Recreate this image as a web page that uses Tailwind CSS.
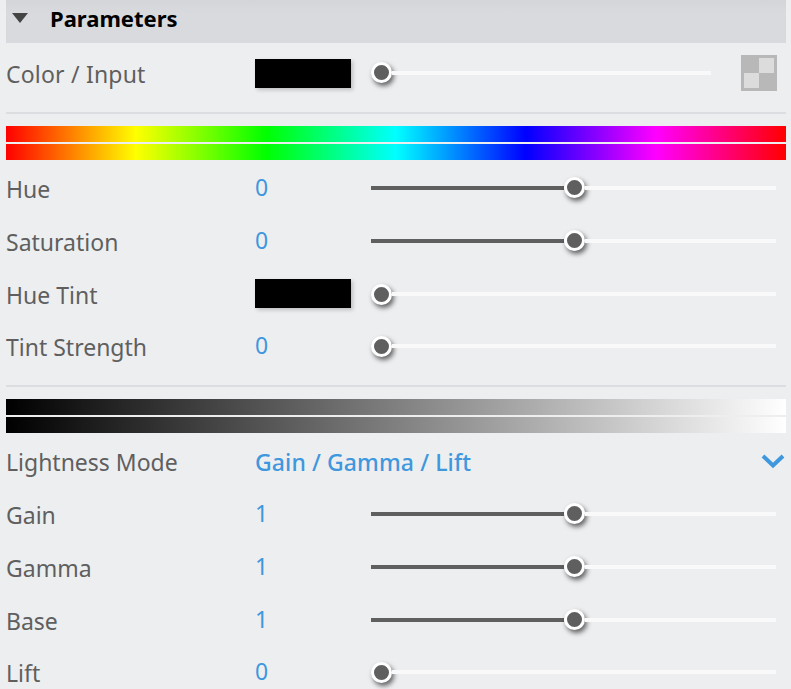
<!doctype html>
<html lang="en">
<head>
	<meta charset="UTF-8" />
	<title>Parameters</title>
	<script src="https://cdn.jsdelivr.net/npm/@tailwindcss/browser@4"></script>
</head>
<body class="bg-[#edeef0] h-[689px] w-[791px] overflow-hidden font-['Noto_Sans',sans-serif] text-[23px] text-[#5f5f5f]">
	<div class="ml-[6px] w-[780px]">
		<!-- header -->
		<div class="h-[43px] bg-[linear-gradient(to_bottom,#d4d5d9,#d9dade_30%)] flex items-center">
			<svg class="ml-[6px] mb-[7px]" width="16" height="10" viewBox="0 0 16 10"><path d="M0 0H16L8 10Z" fill="#444" /></svg>
			<span class="ml-[22px] mb-[6px] text-[22px] font-bold text-black">Parameters</span>
		</div>

		<!-- color / input -->
		<div class="h-[60px] flex items-center">
			<span class="w-[249px] pt-[2px] tracking-[0.2px]">Color / Input</span>
			<div class="mt-[1px] w-[96px] h-[29px] bg-black shadow-[2px_2px_4px_rgba(0,0,0,0.2)]"></div>
			<div class="ml-[20px] mb-[1px] w-[340px] flex items-center">
				<div class="w-[21px] h-[21px] rounded-full bg-[#5f5f5f] border-[3px] border-white shadow-[2px_3px_5px_rgba(0,0,0,0.6)] flex-none"></div>
				<div class="mt-[1px] h-1 grow bg-[#f9f9fa]"></div>
			</div>
			<div class="ml-[30px] w-9 h-9 p-[3px] bg-[#b8b8b8] grid grid-cols-2">
				<div></div>
				<div class="bg-[#dcdcdc]"></div>
				<div class="bg-[#dcdcdc]"></div>
				<div></div>
			</div>
		</div>
		<div class="mt-[9px] h-[2px] bg-[#dcdde0]"></div>

		<!-- hue strips -->
		<div class="mt-[12px] h-4 bg-[linear-gradient(to_right,#f00,#ff0_16.67%,#0f0_33.33%,#0ff_50%,#00f_66.67%,#f0f_83.33%,#f00)]"></div>
		<div class="mt-[2px] h-4 bg-[linear-gradient(to_right,#f00,#ff0_16.67%,#0f0_33.33%,#0ff_50%,#00f_66.67%,#f0f_83.33%,#f00)]"></div>

		<div class="mt-[1px] h-[53px] flex items-center">
			<span class="w-[249px] pt-[4px]">Hue</span>
			<span class="w-[116px] text-[#3f97de]">0</span>
			<div class="w-[405px] flex items-center">
				<div class="mt-[1px] h-1 w-[193px] bg-[#5f5f5f]"></div>
				<div class="w-[21px] h-[21px] rounded-full bg-[#5f5f5f] border-[3px] border-white shadow-[2px_3px_5px_rgba(0,0,0,0.6)] flex-none"></div>
				<div class="mt-[1px] h-1 grow bg-[#f9f9fa]"></div>
			</div>
		</div>
		<div class="h-[53px] flex items-center">
			<span class="w-[249px] pt-[4px]">Saturation</span>
			<span class="w-[116px] text-[#3f97de]">0</span>
			<div class="w-[405px] flex items-center">
				<div class="mt-[1px] h-1 w-[193px] bg-[#5f5f5f]"></div>
				<div class="w-[21px] h-[21px] rounded-full bg-[#5f5f5f] border-[3px] border-white shadow-[2px_3px_5px_rgba(0,0,0,0.6)] flex-none"></div>
				<div class="mt-[1px] h-1 grow bg-[#f9f9fa]"></div>
			</div>
		</div>
		<div class="h-[53px] flex items-center">
			<span class="w-[249px] pt-[4px]">Hue Tint</span>
			<div class="w-[96px] h-[29px] bg-black shadow-[2px_2px_4px_rgba(0,0,0,0.2)]"></div>
			<div class="ml-[20px] mt-[2px] w-[405px] flex items-center">
				<div class="w-[21px] h-[21px] rounded-full bg-[#5f5f5f] border-[3px] border-white shadow-[2px_3px_5px_rgba(0,0,0,0.6)] flex-none"></div>
				<div class="mb-[1px] h-1 grow bg-[#f9f9fa]"></div>
			</div>
		</div>
		<div class="h-[53px] flex items-center">
			<span class="w-[249px] pt-[2px]">Tint Strength</span>
			<span class="w-[116px] pb-[2px] text-[#3f97de]">0</span>
			<div class="w-[405px] flex items-center">
				<div class="w-[21px] h-[21px] rounded-full bg-[#5f5f5f] border-[3px] border-white shadow-[2px_3px_5px_rgba(0,0,0,0.6)] flex-none"></div>
				<div class="mb-[1px] h-1 grow bg-[#f9f9fa]"></div>
			</div>
		</div>
		<div class="mt-[12px] h-[2px] bg-[#dcdde0]"></div>

		<!-- lightness strips -->
		<div class="mt-[12px] h-4 bg-[linear-gradient(to_right,#000,#fff)]"></div>
		<div class="mt-[2px] h-4 bg-[linear-gradient(to_right,#000,#fff)]"></div>

		<div class="h-[54px] flex items-center">
			<span class="w-[249px] pt-[4px]">Lightness Mode</span>
			<span class="grow pt-[4px] font-medium tracking-[0.1px] text-[#3f97de]">Gain / Gamma / Lift</span>
			<svg class="mr-[1px] mt-[2px]" width="24" height="16" viewBox="0 0 24 16"><path d="M2 3L12 12.500L22 3" fill="none" stroke="#3f97de" stroke-width="4" /></svg>
		</div>
		<div class="h-[53px] flex items-center">
			<span class="w-[249px] pt-[4px]">Gain</span>
			<span class="w-[116px] text-[#3f97de]">1</span>
			<div class="w-[405px] flex items-center">
				<div class="mt-[1px] h-1 w-[193px] bg-[#5f5f5f]"></div>
				<div class="w-[21px] h-[21px] rounded-full bg-[#5f5f5f] border-[3px] border-white shadow-[2px_3px_5px_rgba(0,0,0,0.6)] flex-none"></div>
				<div class="mt-[1px] h-1 grow bg-[#f9f9fa]"></div>
			</div>
		</div>
		<div class="h-[53px] flex items-center">
			<span class="w-[249px] pt-[4px]">Gamma</span>
			<span class="w-[116px] text-[#3f97de]">1</span>
			<div class="w-[405px] flex items-center">
				<div class="mt-[1px] h-1 w-[193px] bg-[#5f5f5f]"></div>
				<div class="w-[21px] h-[21px] rounded-full bg-[#5f5f5f] border-[3px] border-white shadow-[2px_3px_5px_rgba(0,0,0,0.6)] flex-none"></div>
				<div class="mt-[1px] h-1 grow bg-[#f9f9fa]"></div>
			</div>
		</div>
		<div class="h-[53px] flex items-center">
			<span class="w-[249px] pt-[4px]">Base</span>
			<span class="w-[116px] text-[#3f97de]">1</span>
			<div class="w-[405px] flex items-center">
				<div class="mt-[1px] h-1 w-[193px] bg-[#5f5f5f]"></div>
				<div class="w-[21px] h-[21px] rounded-full bg-[#5f5f5f] border-[3px] border-white shadow-[2px_3px_5px_rgba(0,0,0,0.6)] flex-none"></div>
				<div class="mt-[1px] h-1 grow bg-[#f9f9fa]"></div>
			</div>
		</div>
		<div class="h-[53px] flex items-center">
			<span class="w-[249px] pt-[2px]">Lift</span>
			<span class="w-[116px] pb-[2px] text-[#3f97de]">0</span>
			<div class="w-[405px] flex items-center">
				<div class="w-[21px] h-[21px] rounded-full bg-[#5f5f5f] border-[3px] border-white shadow-[2px_3px_5px_rgba(0,0,0,0.6)] flex-none"></div>
				<div class="mb-[1px] h-1 grow bg-[#f9f9fa]"></div>
			</div>
		</div>
	</div>
</body>
</html>
